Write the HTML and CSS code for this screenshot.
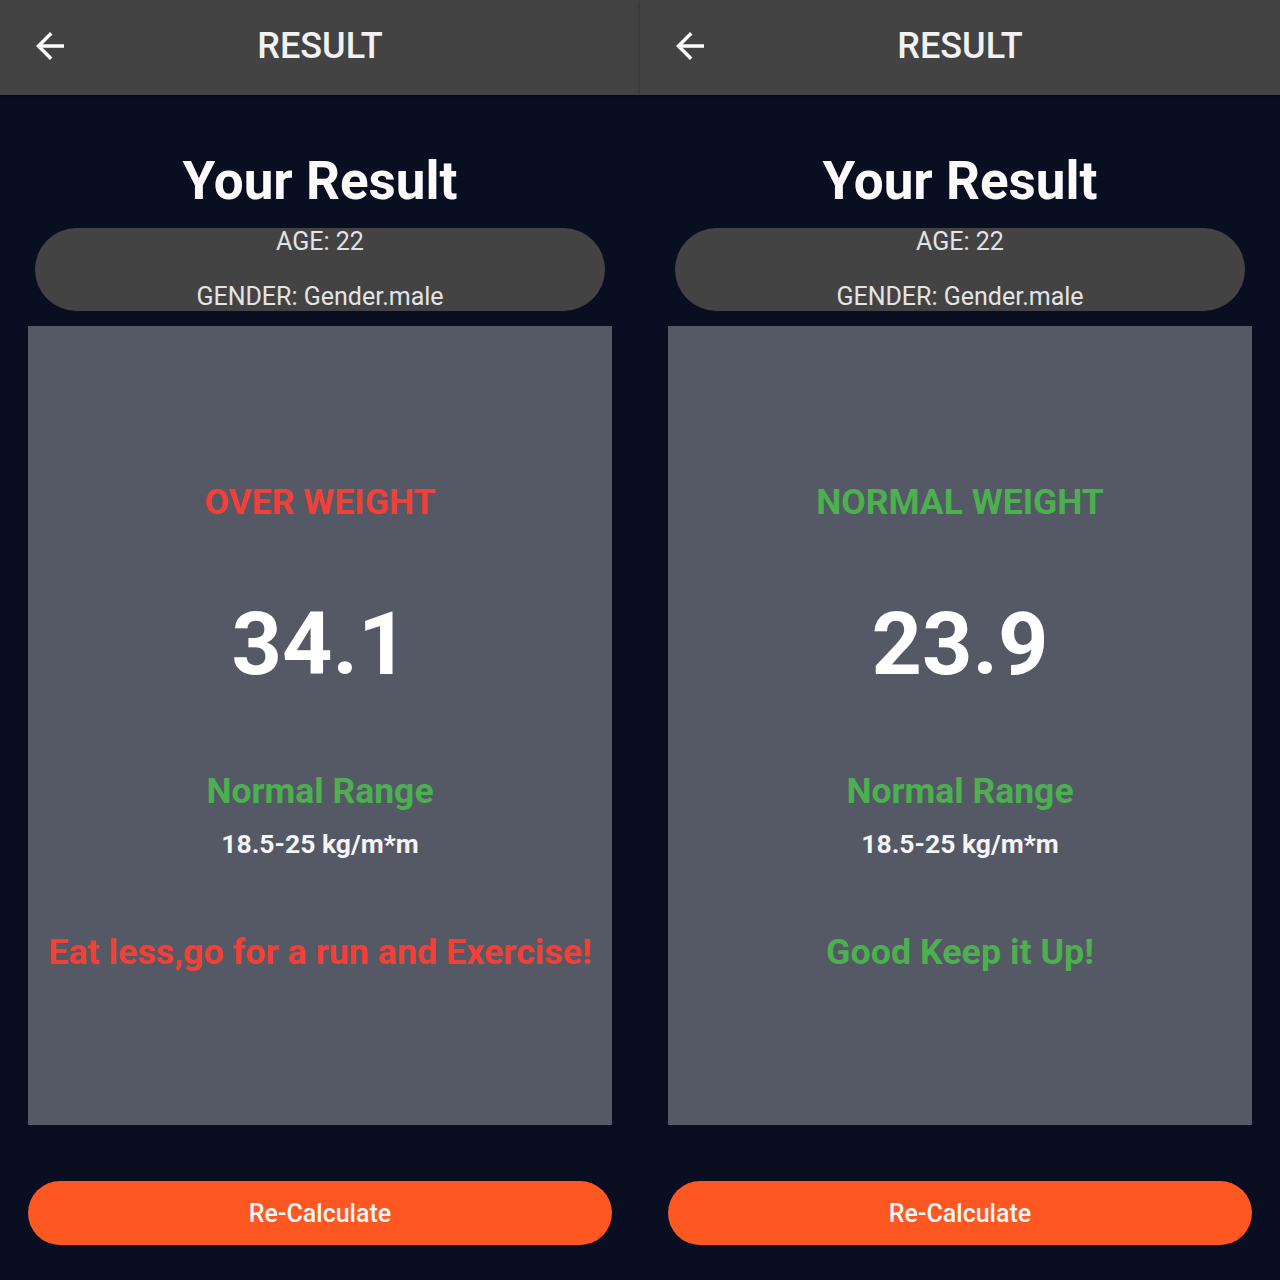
FILE: index.html
```html
<!DOCTYPE html>
<html lang="en">
<head>
<meta charset="utf-8">
<title>BMI Result</title>
<link rel="stylesheet" href="styles.css">
</head>
<body>
<div class="screens">
  <section class="screen">
    <header class="appbar">
      <svg class="back" viewBox="0 0 24 24" width="42" height="42"><path d="M20 11H7.83l5.59-5.59L12 4l-8 8 8 8 1.41-1.41L7.83 13H20v-2z" fill="#fff"/></svg>
      <h1 class="appbar-title">RESULT</h1>
    </header>
    <h2 class="heading">Your Result</h2>
    <div class="info">
      <p class="info-line">AGE: 22</p>
      <p class="info-line">GENDER: Gender.male</p>
    </div>
    <div class="card">
      <p class="status red">OVER WEIGHT</p>
      <p class="bmi">34.1</p>
      <p class="range-label">Normal Range</p>
      <p class="range">18.5-25 kg/m*m</p>
      <p class="advice red">Eat less,go for a run and Exercise!</p>
    </div>
    <button class="recalc">Re-Calculate</button>
  </section>
  <section class="screen">
    <header class="appbar">
      <svg class="back" viewBox="0 0 24 24" width="42" height="42"><path d="M20 11H7.83l5.59-5.59L12 4l-8 8 8 8 1.41-1.41L7.83 13H20v-2z" fill="#fff"/></svg>
      <h1 class="appbar-title">RESULT</h1>
    </header>
    <h2 class="heading">Your Result</h2>
    <div class="info">
      <p class="info-line">AGE: 22</p>
      <p class="info-line">GENDER: Gender.male</p>
    </div>
    <div class="card">
      <p class="status green">NORMAL WEIGHT</p>
      <p class="bmi">23.9</p>
      <p class="range-label">Normal Range</p>
      <p class="range">18.5-25 kg/m*m</p>
      <p class="advice green">Good Keep it Up!</p>
    </div>
    <button class="recalc">Re-Calculate</button>
  </section>
</div>
</body>
</html>
```
FILE: styles.css
```css
* { box-sizing: border-box; }
html, body { margin: 0; padding: 0; }
body {
  background: #0a0e21;
  font-family: Roboto, "Noto Sans", sans-serif;
  color: #fff;
}
p, h1, h2 { margin: 0; }
.screens {
  display: flex;
  width: 1280px;
  height: 1280px;
}
.screen {
  width: 640px;
  height: 1280px;
  display: flex;
  flex-direction: column;
  background: #0a0e21;
}
.appbar {
  height: 95px;
  background: #434343;
  display: flex;
  align-items: center;
  padding-left: 29px;
  box-shadow: 0 2px 3px rgba(0,0,0,0.35);
}
.back { display: block; margin-top: -3px; }
.appbar-title {
  flex: 1;
  text-align: center;
  margin-right: 71px;
  font-size: 36px;
  font-weight: 500;
  color: #f2f2f2;
  margin-top: -3px;
}
.heading {
  margin-top: 56px;
  text-align: center;
  font-size: 53px;
  line-height: 60px;
  font-weight: 700;
  color: #fafafa;
}
.info {
  margin: 17px 35px 0;
  height: 83px;
  background: #434343;
  border-radius: 42px;
  display: flex;
  flex-direction: column;
  align-items: center;
  padding-top: 1px;
  gap: 29px;
}
.info-line {
  font-size: 25px;
  line-height: 26px;
  color: #e4e4e4;
}
.card {
  margin: 15px 28px 0;
  height: 799px;
  background: #555965;
  display: flex;
  flex-direction: column;
  align-items: center;
  padding-top: 156px;
}
.status {
  font-size: 35.5px;
  line-height: 40px;
  font-weight: 700;
}
.red { color: #ef4137; }
.green { color: #4cb050; }
.bmi {
  margin-top: 72px;
  font-size: 88px;
  line-height: 100px;
  font-weight: 700;
  color: #fff;
}
.range-label {
  margin-top: 77px;
  font-size: 35.5px;
  line-height: 40px;
  font-weight: 700;
  color: #4cb050;
}
.range {
  margin-top: 18px;
  font-size: 26.5px;
  line-height: 30px;
  font-weight: 700;
  color: #f4f4f4;
}
.advice {
  margin-top: 73px;
  font-size: 35.8px;
  line-height: 40px;
  font-weight: 700;
}
.recalc {
  margin: 56px 28px 0;
  height: 64px;
  border: none;
  border-radius: 32px;
  background: #ff5722;
  color: #f6f6f6;
  font-family: Roboto, "Noto Sans", sans-serif;
  font-size: 25px;
  font-weight: 500;
  padding: 0;
}
```
